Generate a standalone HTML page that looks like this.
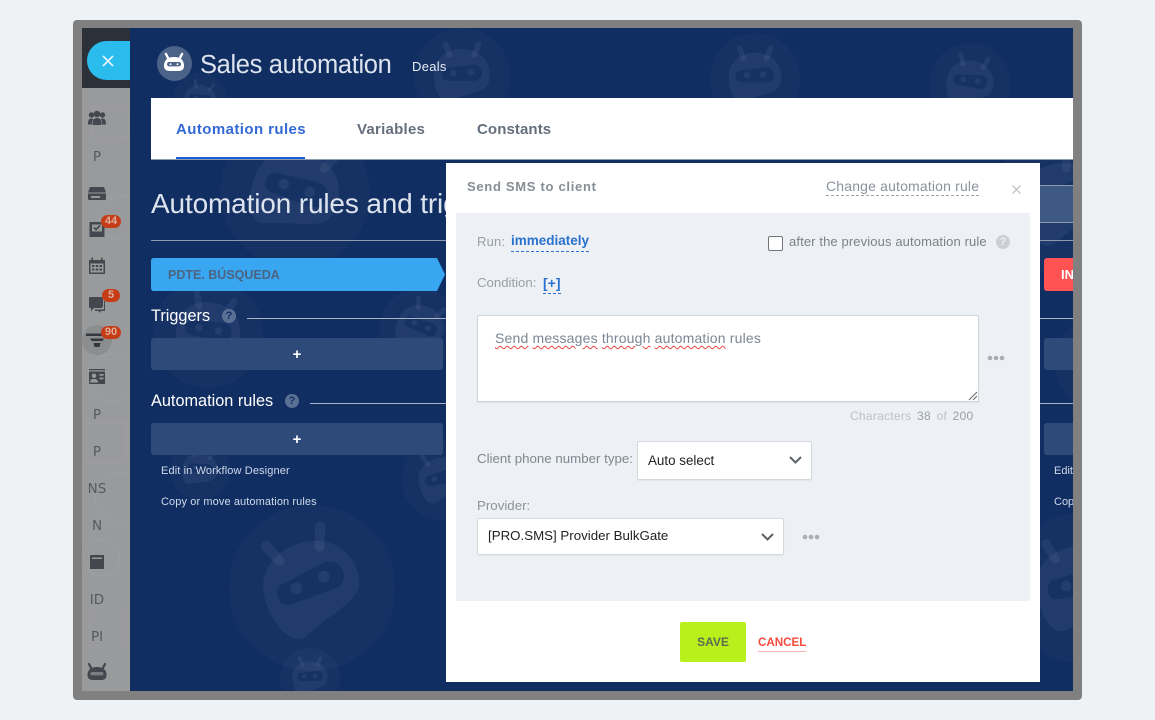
<!DOCTYPE html>
<html><head><meta charset="utf-8"><style>
html,body{margin:0;padding:0}
body{width:1155px;height:720px;background:#eef2f5;position:relative;overflow:hidden;font-family:"Liberation Sans",sans-serif}
div,span.a,svg.a{position:absolute}
.t{position:absolute;white-space:nowrap;line-height:20px;height:20px}
.s{position:absolute;left:82px;width:30px;text-align:center;font-family:"DejaVu Sans",sans-serif;font-size:13.500px;line-height:20px;color:#555a60}
.b{position:absolute;background:#c63c17;color:#dcae9e;font-weight:bold;font-size:11px;line-height:13px;height:13px;border-radius:7px;text-align:center}
.sel{background:#fff;border:1px solid #d3d9df;border-radius:2px;box-sizing:border-box;box-shadow:0 1px 1px rgba(0,0,0,.05)}
.w{text-decoration:underline wavy #e44;text-decoration-thickness:1px;text-underline-offset:2px}
</style></head><body>
<svg width="0" height="0" style="position:absolute"><defs>
<g id="r"><circle r="100" fill="#fff" opacity=".022"/>
<g fill="#fff" opacity=".05"><rect x="-6" y="-84" width="12" height="36" rx="6" transform="rotate(-22 0 -50) translate(-26 0)"/><rect x="-6" y="-84" width="12" height="36" rx="6" transform="rotate(22 0 -50) translate(26 0)"/></g>
<path fill="#fff" opacity=".05" fill-rule="evenodd" d="M-58 -2C-58 -38 -30 -56 0 -56S58 -38 58 -2C58 12 54 22 42 28C22 38 -4 42 -26 52C-46 58 -58 30 -58 -2ZM-36 -16C-42 -12 -44 -4 -42 2C-40 8 -34 10 -28 10L26 10C34 10 42 4 42 -6C42 -18 34 -24 24 -24Z"/>
<circle cx="-18" cy="-6" r="7" fill="#fff" opacity=".06"/><circle cx="18" cy="-8" r="7" fill="#fff" opacity=".06"/></g>
</defs></svg>

<div style="left:73px;top:20px;width:1009px;height:680px;background:#808080;border-radius:4px"></div>

<!-- sidebar -->
<div style="left:82px;top:28px;width:48px;height:663px;background:#999a9b"></div>
<div style="left:82px;top:28px;width:48px;height:60px;background:#2c3038"></div>
<div style="left:87px;top:41px;width:43px;height:39px;background:#2bbcee;border-radius:20px 0 0 20px"></div>
<svg class="a" style="left:101px;top:54px" width="14" height="14"><path d="M2 2L12 12M12 2L2 12" stroke="#e9f7fc" stroke-width="1.6"/></svg>

<svg class="a" style="left:82px;top:88px" width="48" height="603" fill="none" stroke="#9e9f a0" stroke-width="1"></svg>
<svg class="a" style="left:82px;top:88px" width="48" height="603" fill="none" stroke="#9e9fa0" stroke-width="1"><rect x="10" y="20" width="36" height="30"/><circle cx="40" cy="130" r="22"/><circle cx="30" cy="290" r="24"/><rect x="5" y="335" width="40" height="40"/><circle cx="38" cy="410" r="25"/><rect x="8" y="520" width="36" height="40"/><circle cx="20" cy="470" r="18"/></svg>

<svg class="a" style="left:82px;top:0" width="48" height="691" fill="#44484e">
<!-- users -->
<g transform="translate(15,118)"><circle cx="-5.500" cy="-3" r="2.700"/><circle cx="5.500" cy="-3" r="2.700"/><circle cx="0" cy="-4" r="3.300"/><path d="M-9 6.500C-9 2 -8 .5 -5.500 .5L-3.500 1C-5 3 -5 5 -5 6.500ZM9 6.500C9 2 8 .5 5.500 .5L3.500 1C5 3 5 5 5 6.500Z"/><path d="M-4.500 7C-4.500 2 -3 0 0 0S4.500 2 4.500 7Z"/></g>
<!-- inbox -->
<g transform="translate(15,193.500)"><path d="M-7 -6.500H7L9 -1H-9Z"/><path fill-rule="evenodd" d="M-9 0H9V5.500C9 6 8.500 6.500 8 6.500H-8C-8.500 6.500 -9 6 -9 5.500ZM-6 2.500V4.500H3V2.500Z"/></g>
<!-- task -->
<g transform="translate(15,229.500)"><path fill-rule="evenodd" d="M-7.500 -7.500H7.500V7.500H-7.500ZM-5 -5V2H5V-5Z"/><path d="M-3 -2L-1 0 3 -4" fill="none" stroke="#44484e" stroke-width="1.600"/></g>
<!-- calendar -->
<g transform="translate(15,266)"><path fill-rule="evenodd" d="M-8 -6H-5.500V-8.500H-4V-6H4V-8.500H5.500V-6H8V8H-8ZM-6.500 -2.500V6.500H6.500V-2.500Z"/><path d="M-5 -1h2.500v2h-2.500zM-1.200 -1h2.500v2h-2.500zM2.500 -1h2.500v2h-2.500zM-5 2.500h2.500v2h-2.500zM-1.200 2.500h2.500v2h-2.500zM2.500 2.500h2.500v2h-2.500z"/></g>
<!-- chat -->
<g transform="translate(15,304)"><path d="M-7 -7H4C5 -7 6 -6 6 -5V2C6 3 5 4 4 4H-3L-6 7V4H-7C-8 4 -8 3 -8 2V-5C-8 -6 -8 -7 -7 -7Z"/><path d="M7 -3H8V7H4L2 9V7H-2V5.500H6C7 5.500 7 5 7 4Z"/></g>
<!-- filter -->
<circle cx="15" cy="340" r="15" fill="#8b8d8f"/><path d="M4 333.500H26V336H4ZM8 338.500H22L20.500 341H9.500ZM11.500 343H18.500L17.500 347H12.500Z" fill="#34383e"/>
<!-- contact -->
<g transform="translate(15,377)"><path fill-rule="evenodd" d="M-8 -8H8V-6.800H-8ZM-8 -5.500H8V7H-8ZM-3 -3.500A2.200 2.200 0 1 0 -2.990 -3.500ZM-7 5.500H1C1 3 -.5 2 -3 2S-7 3 -7 5.500ZM2.500 -3V-1.200H6.500V-3ZM2.500 .5V2.300H6.500V.5Z"/></g>
<!-- window -->
<g transform="translate(15,562)"><path fill-rule="evenodd" d="M-7 -7H7V7H-7ZM-5 -4.500V-3H5V-4.500Z"/></g>
<!-- robot -->
<g transform="translate(15,673)"><path d="M-6 -5L-8 -9M6 -5L8 -9" stroke="#44484e" stroke-width="2.200" stroke-linecap="round"/><path d="M-9.500 2C-9.500 -4 -5 -6 0 -6S9.500 -4 9.500 2C9.500 6 7 7 4 7H-4C-7 7 -9.500 6 -9.500 2Z"/><rect x="-6.500" y="-1" width="13" height="3.400" rx="1.700" fill="#7c7e81"/></g>
</svg>

<div class="s" style="top:147px">P</div>
<div class="s" style="top:405px">P</div>
<div class="s" style="top:442px">P</div>
<div class="s" style="top:479px">NS</div>
<div class="s" style="top:516px">N</div>
<div class="s" style="top:590px">ID</div>
<div class="s" style="top:627px">PI</div>

<div class="b" style="left:101px;top:215px;width:20px">44</div>
<div class="b" style="left:102px;top:289px;width:18px">5</div>
<div class="b" style="left:101px;top:326px;width:20px">90</div>

<!-- main -->
<div style="left:130px;top:28px;width:943px;height:663px;background:#112e62;overflow:hidden">
<svg class="a" style="left:0;top:0" width="943" height="663">
<use href="#r" transform="translate(182,560) scale(.83) rotate(-20)"/>
<use href="#r" transform="translate(165,165) scale(.75) rotate(20)"/>
<use href="#r" transform="translate(78,305) scale(.55) rotate(12)"/>
<use href="#r" transform="translate(70,72) scale(.27) rotate(14)"/>
<use href="#r" transform="translate(332,48) scale(.48)"/>
<use href="#r" transform="translate(70,442) scale(.3) rotate(10)"/>
<use href="#r" transform="translate(312,452) scale(.4) rotate(-12)"/>
<use href="#r" transform="translate(180,650) scale(.3)"/>
<use href="#r" transform="translate(625,50) scale(.45)"/>
<use href="#r" transform="translate(840,55) scale(.4) rotate(10)"/>
<use href="#r" transform="translate(930,175) scale(.7) rotate(-20)"/>
<use href="#r" transform="translate(950,560) scale(.75) rotate(-10)"/>
<use href="#r" transform="translate(975,335) scale(.5)"/>
<use href="#r" transform="translate(290,300) scale(.4) rotate(25)"/>
</svg>
</div>

<div style="left:157px;top:46px;width:35px;height:35px;border-radius:50%;background:#4b6388"></div>
<svg class="a" style="left:162px;top:50px" width="24" height="26" viewBox="-12 -13 24 26"><path d="M-6 -5L-8 -9M6 -5L8 -9" stroke="#fff" stroke-width="2.400" stroke-linecap="round"/><path fill="#fff" d="M-10 3C-10 -4 -5 -6 0 -6S10 -4 10 3C10 7 7 8 4 8H-4C-7 8 -10 7 -10 3Z"/><rect x="-7" y="-1" width="14" height="4.400" rx="2.200" fill="#4b6388"/><circle cx="-3.500" cy="1.200" r="1" fill="#fff"/><circle cx="3.500" cy="1.200" r="1" fill="#fff"/></svg>
<div class="t" style="left:200px;top:49px;line-height:32px;height:32px;font-size:25.500px;color:#dde4ee;letter-spacing:-.35px">Sales automation</div>
<div class="t" style="left:412px;top:57px;font-size:13px;color:#e6ebf2;letter-spacing:.3px">Deals</div>

<!-- tabs -->
<div style="left:151px;top:98px;width:922px;height:61px;background:#fff;border-bottom:1px solid #8d9ab0;box-sizing:content-box"></div>
<div class="t" style="left:176px;top:120px;font-size:15px;font-weight:bold;color:#3369d6;letter-spacing:.42px">Automation rules</div>
<div style="left:176px;top:157px;width:129px;height:2px;background:#1d5fd2"></div>
<div class="t" style="left:357px;top:120px;font-size:15px;font-weight:bold;color:#656f7b;letter-spacing:.25px">Variables</div>
<div class="t" style="left:477px;top:120px;font-size:15px;font-weight:bold;color:#656f7b;letter-spacing:.1px">Constants</div>

<!-- left content -->
<div class="t" style="left:151px;top:186px;line-height:36px;height:36px;font-size:28px;color:#dde4ee;letter-spacing:-.15px;width:295px;overflow:hidden">Automation rules and trig</div>
<div style="left:151px;top:240px;width:922px;height:1px;background:#8d9ab0"></div>
<svg class="a" style="left:151px;top:258px" width="294" height="33"><path d="M3 0H286L294 16.500 286 33H3C1 33 0 32 0 30V3C0 1 1 0 3 0Z" fill="#38a6f1"/></svg>
<div class="t" style="left:168px;top:265px;font-size:12.500px;font-weight:bold;color:#4d6480">PDTE. BÚSQUEDA</div>

<div class="t" style="left:151px;top:306px;font-size:16.300px;color:#fff">Triggers</div>
<svg class="a" style="left:222px;top:309px" width="14" height="14"><circle cx="7" cy="7" r="7" fill="#5b7094"/></svg>
<div class="t" style="left:222px;top:306px;width:14px;text-align:center;font-size:11px;font-weight:bold;color:#123064">?</div>
<div style="left:247px;top:318px;width:826px;height:1px;background:#aab4c4"></div>
<div style="left:151px;top:338px;width:292px;height:32px;background:#2d4a78;border-radius:3px"></div>
<div style="left:1044px;top:338px;width:29px;height:32px;background:#2d4a78;border-radius:3px 0 0 3px"></div>
<div class="t" style="left:290px;top:345px;width:14px;text-align:center;font-size:15px;font-weight:bold;color:#fff">+</div>

<div class="t" style="left:151px;top:391px;font-size:16.300px;color:#fff">Automation rules</div>
<svg class="a" style="left:285px;top:394px" width="14" height="14"><circle cx="7" cy="7" r="7" fill="#5b7094"/></svg>
<div class="t" style="left:285px;top:391px;width:14px;text-align:center;font-size:11px;font-weight:bold;color:#123064">?</div>
<div style="left:310px;top:403px;width:763px;height:1px;background:#aab4c4"></div>
<div style="left:151px;top:423px;width:292px;height:32px;background:#2d4a78;border-radius:3px"></div>
<div style="left:1044px;top:423px;width:29px;height:32px;background:#2d4a78;border-radius:3px 0 0 3px"></div>
<div class="t" style="left:290px;top:430px;width:14px;text-align:center;font-size:15px;font-weight:bold;color:#fff">+</div>

<div class="t" style="left:161px;top:461px;font-size:11px;color:#cfd9ea;letter-spacing:.12px">Edit in Workflow Designer</div>
<div class="t" style="left:161px;top:492px;font-size:11px;color:#cfd9ea;letter-spacing:.1px">Copy or move automation rules</div>

<!-- right edge -->
<div style="left:1040px;top:185px;width:33px;height:38px;background:#3e5983;border-top:1px solid #8d9ab0;border-bottom:1px solid #8d9ab0;box-sizing:border-box"></div>
<div style="left:1044px;top:258px;width:29px;height:33px;background:#ff5252;border-radius:3px 0 0 3px"></div>
<div class="t" style="left:1061px;top:265px;width:12px;overflow:hidden;font-size:13px;font-weight:bold;color:#fff">IN</div>
<div class="t" style="left:1054px;top:461px;width:19px;overflow:hidden;font-size:11px;color:#cfd9ea">Edit</div>
<div class="t" style="left:1054px;top:492px;width:19px;overflow:hidden;font-size:11px;color:#cfd9ea">Copy</div>

<!-- modal -->
<div style="left:446px;top:163px;width:594px;height:519px;background:#fff"></div>
<div style="left:456px;top:213px;width:574px;height:388px;background:#edf0f4"></div>
<div class="t" style="left:467px;top:177px;font-size:13px;font-weight:bold;color:#868d95;letter-spacing:.7px">Send SMS to client</div>
<div class="t" style="left:826px;top:177px;font-size:14px;color:#8a929c;letter-spacing:.17px;line-height:18px;height:18px;border-bottom:1px dashed #9aa1a9">Change automation rule</div>
<svg class="a" style="left:1012px;top:185px" width="9" height="9"><path d="M.5.500L8.500 8.500M8.500.500L.5 8.500" stroke="#c4c8cc" stroke-width="1.500"/></svg>

<div class="t" style="left:477px;top:232px;font-size:13px;color:#98a0a8;letter-spacing:.2px">Run:</div>
<div class="t" style="left:511px;top:231px;font-size:13.500px;font-weight:bold;color:#2a72d0;line-height:20px;height:20px;border-bottom:1px dashed #2a72d0">immediately</div>
<div class="t" style="left:477px;top:273px;font-size:13.200px;color:#98a0a8">Condition:</div>
<div class="t" style="left:543px;top:273px;font-size:14px;font-weight:bold;color:#2a72d0;height:20px;border-bottom:1px dashed #2a72d0">[+]</div>

<div style="left:768px;top:236px;width:13px;height:13px;background:#fff;border:1px solid #70757b;border-radius:2px"></div>
<div class="t" style="left:789px;top:232px;font-size:13px;color:#79828c;letter-spacing:.12px">after the previous automation rule</div>
<svg class="a" style="left:996px;top:235px" width="14" height="14"><circle cx="7" cy="7" r="7" fill="#ccd0d4"/></svg>
<div class="t" style="left:996px;top:232px;width:14px;text-align:center;font-size:11px;font-weight:bold;color:#edf0f4">?</div>

<div class="sel" style="left:477px;top:315px;width:502px;height:87px;border-color:#cdd4db"></div>
<svg class="a" style="left:968px;top:391px" width="10" height="10"><path d="M1 9L9 1M5 9L9 5" stroke="#666" stroke-width="1"/></svg>
<div class="t" style="left:495px;top:328px;font-size:14px;color:#7b8794;letter-spacing:.18px"><span class="w">Send</span> <span class="w">messages</span> <span class="w">through</span> <span class="w">automation</span> rules</div>
<svg class="a" style="left:987px;top:355px" width="18" height="6" fill="#a8aeb4"><circle cx="3" cy="3" r="2.300"/><circle cx="9" cy="3" r="2.300"/><circle cx="15" cy="3" r="2.300"/></svg>
<div class="t" style="left:850px;top:406px;font-size:12px;color:#bcc2c8;letter-spacing:.27px">Characters <span style="color:#99a0a7;margin-left:2px">38</span> <span style="margin-left:2px">of</span> <span style="color:#99a0a7;margin-left:2px">200</span></div>

<div class="t" style="left:477px;top:449px;font-size:13.300px;color:#7f8790">Client phone number type:</div>
<div class="sel" style="left:637px;top:441px;width:175px;height:39px"></div>
<div class="t" style="left:648px;top:451px;font-size:13.400px;color:#222">Auto select</div>
<svg class="a" style="left:789px;top:456px" width="13" height="8"><path d="M1 1L6.500 6.500 12 1" fill="none" stroke="#5c6168" stroke-width="2"/></svg>

<div class="t" style="left:477px;top:496px;font-size:13.300px;color:#8c949c">Provider:</div>
<div class="sel" style="left:477px;top:518px;width:307px;height:37px"></div>
<div class="t" style="left:488px;top:526px;font-size:13.300px;color:#222">[PRO.SMS] Provider BulkGate</div>
<svg class="a" style="left:761px;top:533px" width="13" height="8"><path d="M1 1L6.500 6.500 12 1" fill="none" stroke="#5c6168" stroke-width="2"/></svg>
<svg class="a" style="left:802px;top:534px" width="18" height="6" fill="#a8aeb4"><circle cx="3" cy="3" r="2.300"/><circle cx="9" cy="3" r="2.300"/><circle cx="15" cy="3" r="2.300"/></svg>

<div style="left:680px;top:622px;width:66px;height:40px;background:#b9ef1a;border-radius:2px"></div>
<div class="t" style="left:680px;top:632px;width:66px;text-align:center;font-size:12px;font-weight:bold;color:#5c6b52">SAVE</div>
<div class="t" style="left:758px;top:633px;font-size:11.600px;font-weight:bold;color:#f44a3e">CANCEL</div>
<div style="left:758px;top:651px;width:48px;height:1px;background:#fbb5af"></div>
</body></html>
